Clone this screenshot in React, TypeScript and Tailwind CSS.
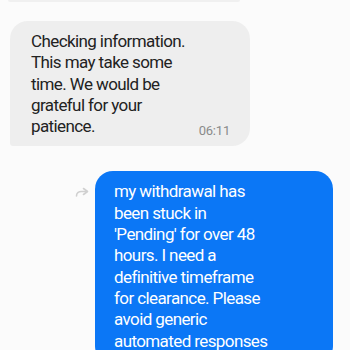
export default function App() {
  const font = { fontFamily: "Roboto, 'Noto Sans', sans-serif" };

  return (
    <div className="w-[350px] h-[350px] overflow-hidden bg-[#fbfbfb]" style={font}>
      {/* tail of the previous incoming bubble */}
      <div className="ml-[8px] w-[232px] h-[2px] rounded-b-[2px] bg-[#f0f0f0]" />

      {/* incoming message */}
      <div className="mt-[19px] ml-[10px] w-[240px] rounded-[18px] rounded-bl-[3px] bg-[#eeeeee] pl-[21px] pr-[20px] pt-[10px] pb-[9px] flex items-end justify-between">
        <p className="text-[17px] leading-[21.3px] tracking-[-0.6px] text-[#222222]">
          Checking information.
          <br />
          This may take some
          <br />
          time. We would be
          <br />
          grateful for your
          <br />
          patience.
        </p>
        <span className="text-[13px] leading-[16px] tracking-[-0.2px] text-[#8a8a8a] -mb-[2px]">06:11</span>
      </div>

      {/* outgoing message */}
      <div className="mt-[25px] pr-[17px] flex justify-end items-start">
        <svg
          className="mt-[16px] mr-[6px]"
          width="14"
          height="10"
          viewBox="0 0 14 10"
          fill="none"
          stroke="#d0d0d0"
          strokeWidth="1.6"
          strokeLinecap="round"
          strokeLinejoin="round"
        >
          <path d="M8.5 1.5 L12.5 4.5 L8.5 7.5" />
          <path d="M12 4.5 H6.5 C3.5 4.5 1.5 6 1.5 9" />
        </svg>
        <div className="w-[238px] rounded-[18px] bg-[#0b77f6] pl-[19px] pr-[12px] pt-[10px] pb-[12px]">
          <p className="text-[17px] leading-[21.3px] tracking-[-0.6px] text-white">
            my withdrawal has
            <br />
            been stuck in
            <br />
            'Pending' for over 48
            <br />
            hours. I need a
            <br />
            definitive timeframe
            <br />
            for clearance. Please
            <br />
            avoid generic
            <br />
            automated responses
          </p>
        </div>
      </div>
    </div>
  );
}
